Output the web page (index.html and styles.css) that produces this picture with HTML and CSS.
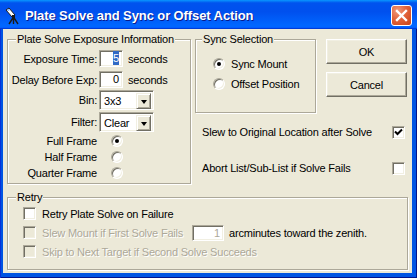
FILE: index.html
```html
<!DOCTYPE html>
<html lang="en">
<head>
    <meta charset="UTF-8">
    <title>Plate Solve and Sync or Offset Action</title>
    <link rel="stylesheet" href="styles.css">
</head>
<body>
    <div class="window">
        <div class="titlebar">
            <svg class="app-icon" width="16" height="18" viewBox="0 0 16 18">
                <path d="M2 3 L5 1 L11 8 L8 10 Z" fill="#fff" stroke="#1a1a1a" stroke-width="1"/>
                <path d="M3 3 L5 2 L6 3 L4 4 Z" fill="#6fa8ff"/>
                <rect x="8" y="8" width="3" height="3" fill="#1a1a1a"/>
                <path d="M9.5 10 L5 17 M9.5 10 L9.5 17 M9.5 10 L14 17" stroke="#1a1a1a" stroke-width="1.4" fill="none"/>
            </svg>
            <span class="title">Plate Solve and Sync or Offset Action</span>
            <div class="close-btn">
                <svg width="21" height="21" viewBox="0 0 21 21">
                    <path d="M6 6 L15 15 M15 6 L6 15" stroke="#fff" stroke-width="2.4" stroke-linecap="square"/>
                </svg>
            </div>
        </div>
        <div class="client">
            <div class="top-row">
                <!-- exposure settings -->
                <div class="group group-exposure">
                    <span class="group-title">Plate Solve Exposure Information</span>
                    <div class="field">
                        <span class="field-label">Exposure Time:</span>
                        <span class="textbox"><span class="selected">5</span></span>
                        <span class="unit">seconds</span>
                    </div>
                    <div class="field field-delay">
                        <span class="field-label">Delay Before Exp:</span>
                        <span class="textbox">0</span>
                        <span class="unit">seconds</span>
                    </div>
                    <div class="field field-combo">
                        <span class="field-label">Bin:</span>
                        <span class="combo"><span class="combo-text">3x3</span><span class="combo-btn"></span></span>
                    </div>
                    <div class="field field-combo">
                        <span class="field-label">Filter:</span>
                        <span class="combo"><span class="combo-text">Clear</span><span class="combo-btn"></span></span>
                    </div>
                    <div class="field field-radio field-first">
                        <span class="field-label">Full Frame</span>
                        <span class="radio checked"></span>
                    </div>
                    <div class="field field-radio">
                        <span class="field-label">Half Frame</span>
                        <span class="radio"></span>
                    </div>
                    <div class="field field-radio">
                        <span class="field-label">Quarter Frame</span>
                        <span class="radio"></span>
                    </div>
                </div>

                <div class="side">
                    <div class="side-top">
                        <div class="group group-sync">
                            <span class="group-title">Sync Selection</span>
                            <div class="option"><span class="radio checked"></span>Sync Mount</div>
                            <div class="option"><span class="radio"></span>Offset Position</div>
                        </div>
                        <div class="buttons">
                            <div class="btn">OK</div>
                            <div class="btn">Cancel</div>
                        </div>
                    </div>
                    <div class="check-row">
                        <span>Slew to Original Location after Solve</span>
                        <span class="checkbox checked">
                            <svg width="9" height="9" viewBox="0 0 9 9"><path d="M1 3.5 L3.5 6 L8 1.5" stroke="#000" stroke-width="2" fill="none"/></svg>
                        </span>
                    </div>
                    <div class="check-row check-row-second">
                        <span>Abort List/Sub-List if Solve Fails</span>
                        <span class="checkbox"></span>
                    </div>
                </div>
            </div>

            <!-- retry options -->
            <div class="group group-retry">
                <span class="group-title">Retry</span>
                <div class="retry-row">
                    <span class="checkbox"></span>
                    <span>Retry Plate Solve on Failure</span>
                </div>
                <div class="retry-row disabled">
                    <span class="checkbox"></span>
                    <span class="retry-label">Slew Mount if First Solve Fails</span>
                    <span class="textbox textbox-wide">1</span>
                    <span class="zenith">arcminutes toward the zenith.</span>
                </div>
                <div class="retry-row disabled">
                    <span class="checkbox"></span>
                    <span>Skip to Next Target if Second Solve Succeeds</span>
                </div>
            </div>
        </div>
    </div>
</body>
</html>
```

FILE: styles.css
```css
body {
    margin: 0;
    font-family: "Liberation Sans", Arial, sans-serif;
    font-size: 11px;
    letter-spacing: -0.2px;
    color: #000;
    background: #ece9d8;
}
.window {
    width: 417px;
    height: 278px;
    display: flex;
    flex-direction: column;
    background: #0054e3;
    box-shadow: inset 1px 0 #0831d9, inset -1px 0 #00138c, inset 0 -1px #00138c;
}
.titlebar {
    height: 29px;
    flex: none;
    display: flex;
    align-items: center;
    padding: 1px 5px 0 4px;
    box-sizing: border-box;
    background: linear-gradient(180deg, #0997ff 0%, #0053ee 10%, #0050ee 40%, #0066ff 86%, #0066ff 92%, #005bff 95%, #003dd7 97%, #003dd7 100%);
}
.app-icon {
    flex: none;
    margin-top: 1px;
}
.title {
    margin-left: 5px;
    color: #fff;
    font-size: 13px;
    font-weight: bold;
    letter-spacing: -0.1px;
    text-shadow: 1px 1px #0a1a8c;
}
.close-btn {
    margin-left: auto;
    width: 21px;
    height: 21px;
    box-sizing: border-box;
    border: 1px solid #fff;
    border-radius: 3px;
    background: radial-gradient(circle at 30% 25%, #f09a7c 0%, #e2643c 45%, #c84218 100%);
    display: flex;
    align-items: center;
    justify-content: center;
}
.close-btn svg {
    margin: -1px;
}
.client {
    flex: 1;
    margin: 0 5px 5px 3px;
    background: #ece9d8;
    padding: 10px 0 0 4px;
}
.top-row {
    display: flex;
    align-items: flex-start;
}

/* group boxes */
.group {
    position: relative;
    box-sizing: border-box;
    border: 1px solid #aca899;
    box-shadow: inset 1px 1px #fff, 1px 1px #fff;
}
.group-title {
    position: absolute;
    top: -7px;
    left: 8px;
    padding: 0 1px;
    line-height: 13px;
    background: #ece9d8;
}
.group-exposure {
    width: 184px;
    height: 145px;
    padding-top: 10px;
}
.group-sync {
    width: 121px;
    height: 74px;
    padding: 14px 0 0 17px;
}
.group-sync .group-title {
    left: 6px;
}
.group-retry {
    width: 401px;
    height: 73px;
    margin-top: 13px;
    padding: 6px 0 0 15px;
}

/* exposure fields */
.field {
    display: flex;
    align-items: center;
    gap: 2px;
    height: 17px;
}
.field-label {
    width: 89px;
    text-align: right;
    flex: none;
}
.field-delay {
    margin-top: 4px;
}
.field-combo {
    height: 20px;
    margin-top: 2px;
}
.field-radio {
    height: 16px;
}
.field-radio .field-label {
    padding-right: 12px;
    box-sizing: border-box;
    width: 101px;
}
.field-first {
    margin-top: 1px;
}
.unit {
    margin-left: 3px;
}
.textbox {
    width: 24px;
    height: 17px;
    box-sizing: border-box;
    background: #fff;
    border: 1px solid;
    border-color: #aca899 #fff #fff #aca899;
    box-shadow: inset 1px 1px #716f64, inset -1px -1px #f1efe2;
    text-align: right;
    padding: 0 3px 0 0;
    line-height: 15px;
}
.selected {
    background: #316ac5;
    color: #fff;
    padding: 1px 0;
}
.combo {
    display: flex;
    width: 55px;
    height: 20px;
    box-sizing: border-box;
    background: #fff;
    border: 1px solid;
    border-color: #aca899 #fff #fff #aca899;
    box-shadow: inset 1px 1px #716f64, inset -1px -1px #f1efe2;
    padding: 2px;
}
.combo-text {
    flex: 1;
    padding-left: 2px;
    line-height: 16px;
}
.combo-btn {
    width: 15px;
    height: 16px;
    box-sizing: border-box;
    background: #ece9d8;
    border: 1px solid;
    border-color: #f1efe2 #716f64 #716f64 #f1efe2;
    box-shadow: inset 1px 1px #fff, inset -1px -1px #aca899;
    display: flex;
    align-items: center;
    justify-content: center;
}
.combo-btn::after {
    content: "";
    border-left: 3.5px solid transparent;
    border-right: 3.5px solid transparent;
    border-top: 4px solid #000;
    margin-top: 1px;
}

/* radios and checkboxes */
.radio {
    flex: none;
    width: 12px;
    height: 12px;
    box-sizing: border-box;
    border-radius: 50%;
    background: #fff;
    border: 1px solid;
    border-color: #aca899 #fff #fff #aca899;
    box-shadow: inset 1px 1px #716f64, inset -1px -1px #f1efe2;
    display: flex;
    align-items: center;
    justify-content: center;
}
.radio.checked::after {
    content: "";
    width: 4px;
    height: 4px;
    border-radius: 50%;
    background: #000;
}
.option {
    display: flex;
    align-items: center;
    gap: 6px;
    height: 20px;
}
.checkbox {
    flex: none;
    width: 13px;
    height: 13px;
    box-sizing: border-box;
    background: #fff;
    border: 1px solid;
    border-color: #aca899 #fff #fff #aca899;
    box-shadow: inset 1px 1px #716f64, inset -1px -1px #f1efe2;
    display: flex;
    align-items: center;
    justify-content: center;
}

/* right column */
.side {
    width: 213px;
    margin-left: 4px;
}
.side-top {
    display: flex;
    align-items: flex-start;
}
.buttons {
    margin-left: 10px;
    display: flex;
    flex-direction: column;
    gap: 8px;
}
.btn {
    width: 81px;
    height: 25px;
    box-sizing: border-box;
    background: #ece9d8;
    border: 1px solid;
    border-color: #fff #716f64 #716f64 #fff;
    box-shadow: inset -1px -1px #aca899, inset 1px 1px #f1efe2;
    display: flex;
    align-items: center;
    justify-content: center;
}
.check-row {
    display: flex;
    align-items: center;
    justify-content: space-between;
    height: 20px;
    padding: 0 3px 0 7px;
    margin-top: 9px;
}
.check-row-second {
    margin-top: 16px;
}

/* retry group */
.retry-row {
    display: flex;
    align-items: center;
    gap: 6px;
    height: 19px;
}
.retry-label {
    width: 144px;
}
.disabled {
    color: #aca899;
    text-shadow: 1px 1px #fff;
}
.disabled .checkbox {
    background: #ece9d8;
}
.textbox-wide {
    width: 32px;
    height: 16px;
    line-height: 14px;
    margin-left: 0;
}
.zenith {
    margin-left: -1px;
    color: #000;
    text-shadow: none;
}
```
